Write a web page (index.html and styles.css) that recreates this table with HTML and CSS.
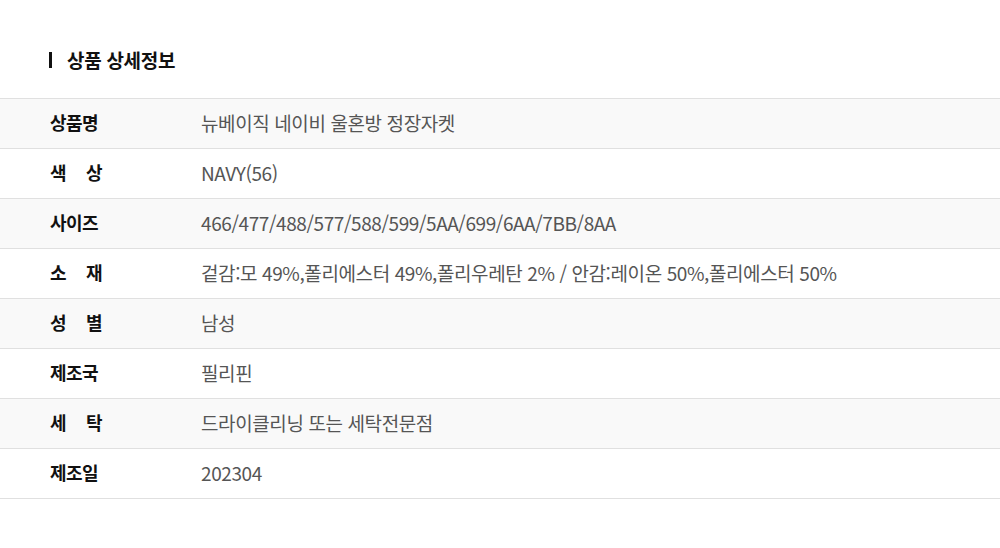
FILE: index.html
```html
<!DOCTYPE html>
<html lang="ko">
<head>
    <meta charset="UTF-8">
    <meta name="viewport" content="width=device-width, initial-scale=1.0">
    <title>상품 상세정보</title>
    <link rel="stylesheet" href="styles.css">
</head>
<body>
    <div class="detail">
        <h2 class="detail-title">상품 상세정보</h2>

        <table class="detail-table">
            <tr>
                <th><span class="label">상품명</span></th>
                <td>뉴베이직 네이비 울혼방 정장자켓</td>
            </tr>
            <tr>
                <th><span class="label">색 상</span></th>
                <td>NAVY(56)</td>
            </tr>
            <tr>
                <th><span class="label">사이즈</span></th>
                <td>466/477/488/577/588/599/5AA/699/6AA/7BB/8AA</td>
            </tr>
            <tr>
                <th><span class="label">소 재</span></th>
                <td>겉감:모 49%,폴리에스터 49%,폴리우레탄 2% / 안감:레이온 50%,폴리에스터 50%</td>
            </tr>
            <tr>
                <th><span class="label">성 별</span></th>
                <td>남성</td>
            </tr>
            <tr>
                <th><span class="label">제조국</span></th>
                <td>필리핀</td>
            </tr>
            <tr>
                <th><span class="label">세 탁</span></th>
                <td>드라이클리닝 또는 세탁전문점</td>
            </tr>
            <tr>
                <th><span class="label">제조일</span></th>
                <td>202304</td>
            </tr>
        </table>
    </div>
</body>
</html>
```

FILE: styles.css
```css
* {
    margin: 0;
    padding: 0;
    box-sizing: border-box;
}

body {
    background-color: #fff;
    font-family: "Noto Sans CJK KR", "Noto Sans", sans-serif;
    color: #111;
}

.detail {
    padding-top: 46px;
}

/* 제목 + 왼쪽 막대 */
.detail-title {
    position: relative;
    display: flex;
    align-items: center;
    height: 28px;
    margin-left: 49px;
    padding-left: 18px;
    font-size: 19px;
    font-weight: 700;
    letter-spacing: -0.3px;
    line-height: 16px;
}

.detail-title::before {
    content: "";
    position: absolute;
    left: 0;
    top: 6px;
    width: 3px;
    height: 16px;
    background-color: #111;
}

.detail-table {
    width: 100%;
    margin-top: 24px;
    border-collapse: collapse;
    border-top: 1px solid #e0e0e0;
}

.detail-table tr {
    height: 50px;
    border-bottom: 1px solid #e0e0e0;
}

.detail-table tr:nth-child(odd) {
    background-color: #f9f9f9;
}

.detail-table th {
    width: 201px;
    padding-left: 50px;
    padding-bottom: 3px;
    text-align: left;
    font-weight: 700;
    font-size: 18px;
    color: #111;
}

.label {
    display: inline-block;
    width: 52px;
    text-align: justify;
    text-align-last: justify;
    letter-spacing: -0.5px;
}

.detail-table td {
    padding-bottom: 3px;
    font-size: 19px;
    color: #555;
    letter-spacing: -0.4px;
}
```
